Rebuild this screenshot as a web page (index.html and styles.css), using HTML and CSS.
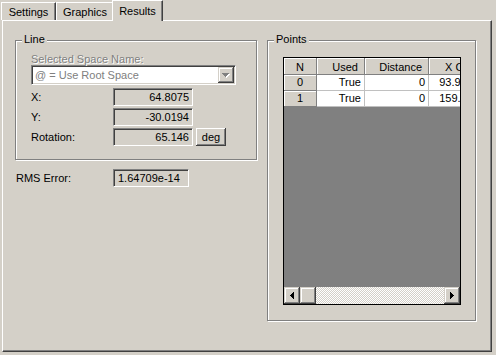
FILE: index.html
```html
<!DOCTYPE html>
<html lang="en">
<head>
  <meta charset="UTF-8">
  <title>Results</title>
  <link rel="stylesheet" href="styles.css">
</head>
<body>

<div class="window">
  <div class="tabs">
    <div class="tab tab-settings">Settings</div>
    <div class="tab tab-graphics">Graphics</div>
    <div class="tab tab-results active">Results</div>
  </div>

  <div class="panel">
    <div class="left-col">
      <div class="group line-group">
        <div class="group-title">Line</div>
        <div class="field-label disabled">Selected Space Name:</div>
        <div class="combo">
          <span class="combo-text">@ = Use Root Space</span>
          <span class="combo-btn">
            <svg width="16" height="16" viewBox="0 0 16 16" shape-rendering="crispEdges">
              <g fill="#fff">
                <rect x="5" y="7" width="7" height="1"/><rect x="6" y="8" width="5" height="1"/>
                <rect x="7" y="9" width="3" height="1"/><rect x="8" y="10" width="1" height="1"/>
              </g>
              <g fill="#808080">
                <rect x="4" y="6" width="7" height="1"/><rect x="5" y="7" width="5" height="1"/>
                <rect x="6" y="8" width="3" height="1"/><rect x="7" y="9" width="1" height="1"/>
              </g>
            </svg>
          </span>
        </div>
        <div class="row first">
          <span>X:</span>
          <span class="value">64.8075</span>
        </div>
        <div class="row">
          <span>Y:</span>
          <span class="value">-30.0194</span>
        </div>
        <div class="row">
          <span>Rotation:</span>
          <span class="value">65.146</span>
          <button class="btn">deg</button>
        </div>
      </div>

      <div class="rms-row">
        <span class="rms-label">RMS Error:</span>
        <span class="value rms-value">1.64709e-14</span>
      </div>
    </div>

    <div class="group points-group">
      <div class="group-title">Points</div>
      <div class="grid">
        <div class="grid-table">
          <div class="hcell center">N</div>
          <div class="hcell">Used</div>
          <div class="hcell">Distance</div>
          <div class="hcell wide">X Coord</div>

          <div class="hcell row-head center">0</div>
          <div class="cell">True</div>
          <div class="cell">0</div>
          <div class="cell">93.9512</div>

          <div class="hcell row-head center">1</div>
          <div class="cell">True</div>
          <div class="cell">0</div>
          <div class="cell">159.348</div>
        </div>
        <div class="grid-empty"></div>
        <div class="hscroll">
          <span class="sbtn">
            <svg width="14" height="15" viewBox="0 0 14 15" shape-rendering="crispEdges">
              <g fill="#000">
                <rect x="5" y="7" width="1" height="1"/><rect x="6" y="6" width="1" height="3"/>
                <rect x="7" y="5" width="1" height="5"/><rect x="8" y="4" width="1" height="7"/>
              </g>
            </svg>
          </span>
          <span class="sbtn thumb"></span>
          <span class="track"></span>
          <span class="sbtn">
            <svg width="14" height="15" viewBox="0 0 14 15" shape-rendering="crispEdges">
              <g fill="#000">
                <rect x="5" y="4" width="1" height="7"/><rect x="6" y="5" width="1" height="5"/>
                <rect x="7" y="6" width="1" height="3"/><rect x="8" y="7" width="1" height="1"/>
              </g>
            </svg>
          </span>
        </div>
      </div>
    </div>
  </div>
</div>

</body>
</html>
```

FILE: styles.css
```css
body { margin:0; background:#d4d0c8; font:11px "Liberation Sans", Arial, sans-serif; color:#000; }
.window { padding-left:2px; width:490px; }

/* tabs */
.tabs { display:flex; align-items:flex-end; height:20px; margin-left:-1px; }
.tab { box-sizing:border-box; height:18px; padding-top:3px; line-height:13px; text-align:center;
  border-top:1px solid #fff; border-left:1px solid #fff; border-right:1px solid #404040;
  box-shadow:inset -1px 0 #808080; }
.tab-settings { width:55px; }
.tab-graphics { width:58px; }
.tab-results { width:51px; }
.tab.active { height:21px; padding-top:4px; margin:0 -2px -1px -2px; background:#d4d0c8; position:relative; z-index:1; }

/* panel */
.panel { box-sizing:border-box; height:332px; display:flex; gap:10px; padding:19px 0 0 12px;
  border-top:1px solid #fff; border-left:1px solid #fff;
  border-right:1px solid #404040; border-bottom:1px solid #404040;
  box-shadow:inset -1px -1px #808080; }

.group { box-sizing:border-box; border:1px solid #808080; box-shadow:inset 1px 1px #fff, 1px 1px #fff; padding:0 15px; }
.group-title { width:fit-content; margin:-8px 0 0 -9px; padding:0 2px; line-height:13px; background:#d4d0c8; }

.left-col { display:flex; flex-direction:column; width:242px; }
.line-group { height:120px; }
.points-group { width:209px; height:281px; }

.disabled { color:#808080; text-shadow:1px 1px #fff; }
.field-label { line-height:11px; margin-top:8px; }

.combo { box-sizing:border-box; display:flex; width:205px; height:20px; padding:1px;
  background:#fff; border:1px solid; border-color:#808080 #fff #fff #808080;
  box-shadow:inset 1px 1px #404040, inset -1px -1px #d4d0c8; }
.combo-text { flex:1; color:#808080; padding-left:2px; line-height:16px; }
.combo-btn { width:16px; height:16px; background:#d4d0c8;
  box-shadow:inset -1px -1px #404040, inset 1px 1px #d4d0c8, inset -2px -2px #808080, inset 2px 2px #fff; }
.combo-btn svg { display:block; }

.row { display:grid; grid-template-columns:82px 80px auto; align-items:center; height:18px; margin-top:2px; }
.row.first { margin-top:3px; }

.value { box-sizing:border-box; height:18px; padding:0 3px; line-height:16px; text-align:right;
  border:1px solid; border-color:#808080 #fff #fff #808080;
  box-shadow:inset 1px 1px #404040, inset -1px -1px #d4d0c8; }

.btn { box-sizing:border-box; width:30px; height:18px; margin-left:3px; padding:0; font:inherit; color:#000;
  background:#d4d0c8; border:none;
  box-shadow:inset -1px -1px #404040, inset 1px 1px #fff, inset -2px -2px #808080; }

.rms-row { display:grid; grid-template-columns:98px 76px; align-items:center; margin-top:9px; }
.rms-label { padding-left:1px; }
.rms-value { text-align:left; padding-left:4px; }

/* grid */
.grid { box-sizing:border-box; display:flex; flex-direction:column; width:178px; height:248px; margin-top:11px;
  border:1px solid #000; overflow:hidden; }
.grid-table { display:grid; grid-template-columns:33px 48px 64px 54px; grid-template-rows:17px 16px 16px; }
.hcell { box-sizing:border-box; padding:3px 6px 0 0; line-height:13px; text-align:right; white-space:nowrap;
  background:#d4d0c8; border-right:1px solid #808080; border-bottom:1px solid #808080; box-shadow:inset 1px 1px #fff; }
.hcell.wide { padding-right:0; padding-left:16px; text-align:left; overflow:hidden; }
.hcell.row-head { padding-top:1px; }
.center { text-align:center; padding-right:0; }
.cell { box-sizing:border-box; padding:1px 3px 0 0; line-height:13px; text-align:right; white-space:nowrap;
  background:#fff; border-right:1px solid #c0c0c0; border-bottom:1px solid #c0c0c0; }
.grid-empty { flex:1; background:#808080; }

.hscroll { display:flex; height:17px; flex-shrink:0; }
.sbtn { box-sizing:border-box; width:16px; height:17px; padding:1px; background:#d4d0c8;
  box-shadow:inset -1px -1px #404040, inset 1px 1px #d4d0c8, inset -2px -2px #808080, inset 2px 2px #fff; }
.sbtn svg { display:block; }
.track { flex:1; background:repeating-conic-gradient(#fff 0 25%, #d4d0c8 0 50%) 0 0 / 2px 2px; }
```
